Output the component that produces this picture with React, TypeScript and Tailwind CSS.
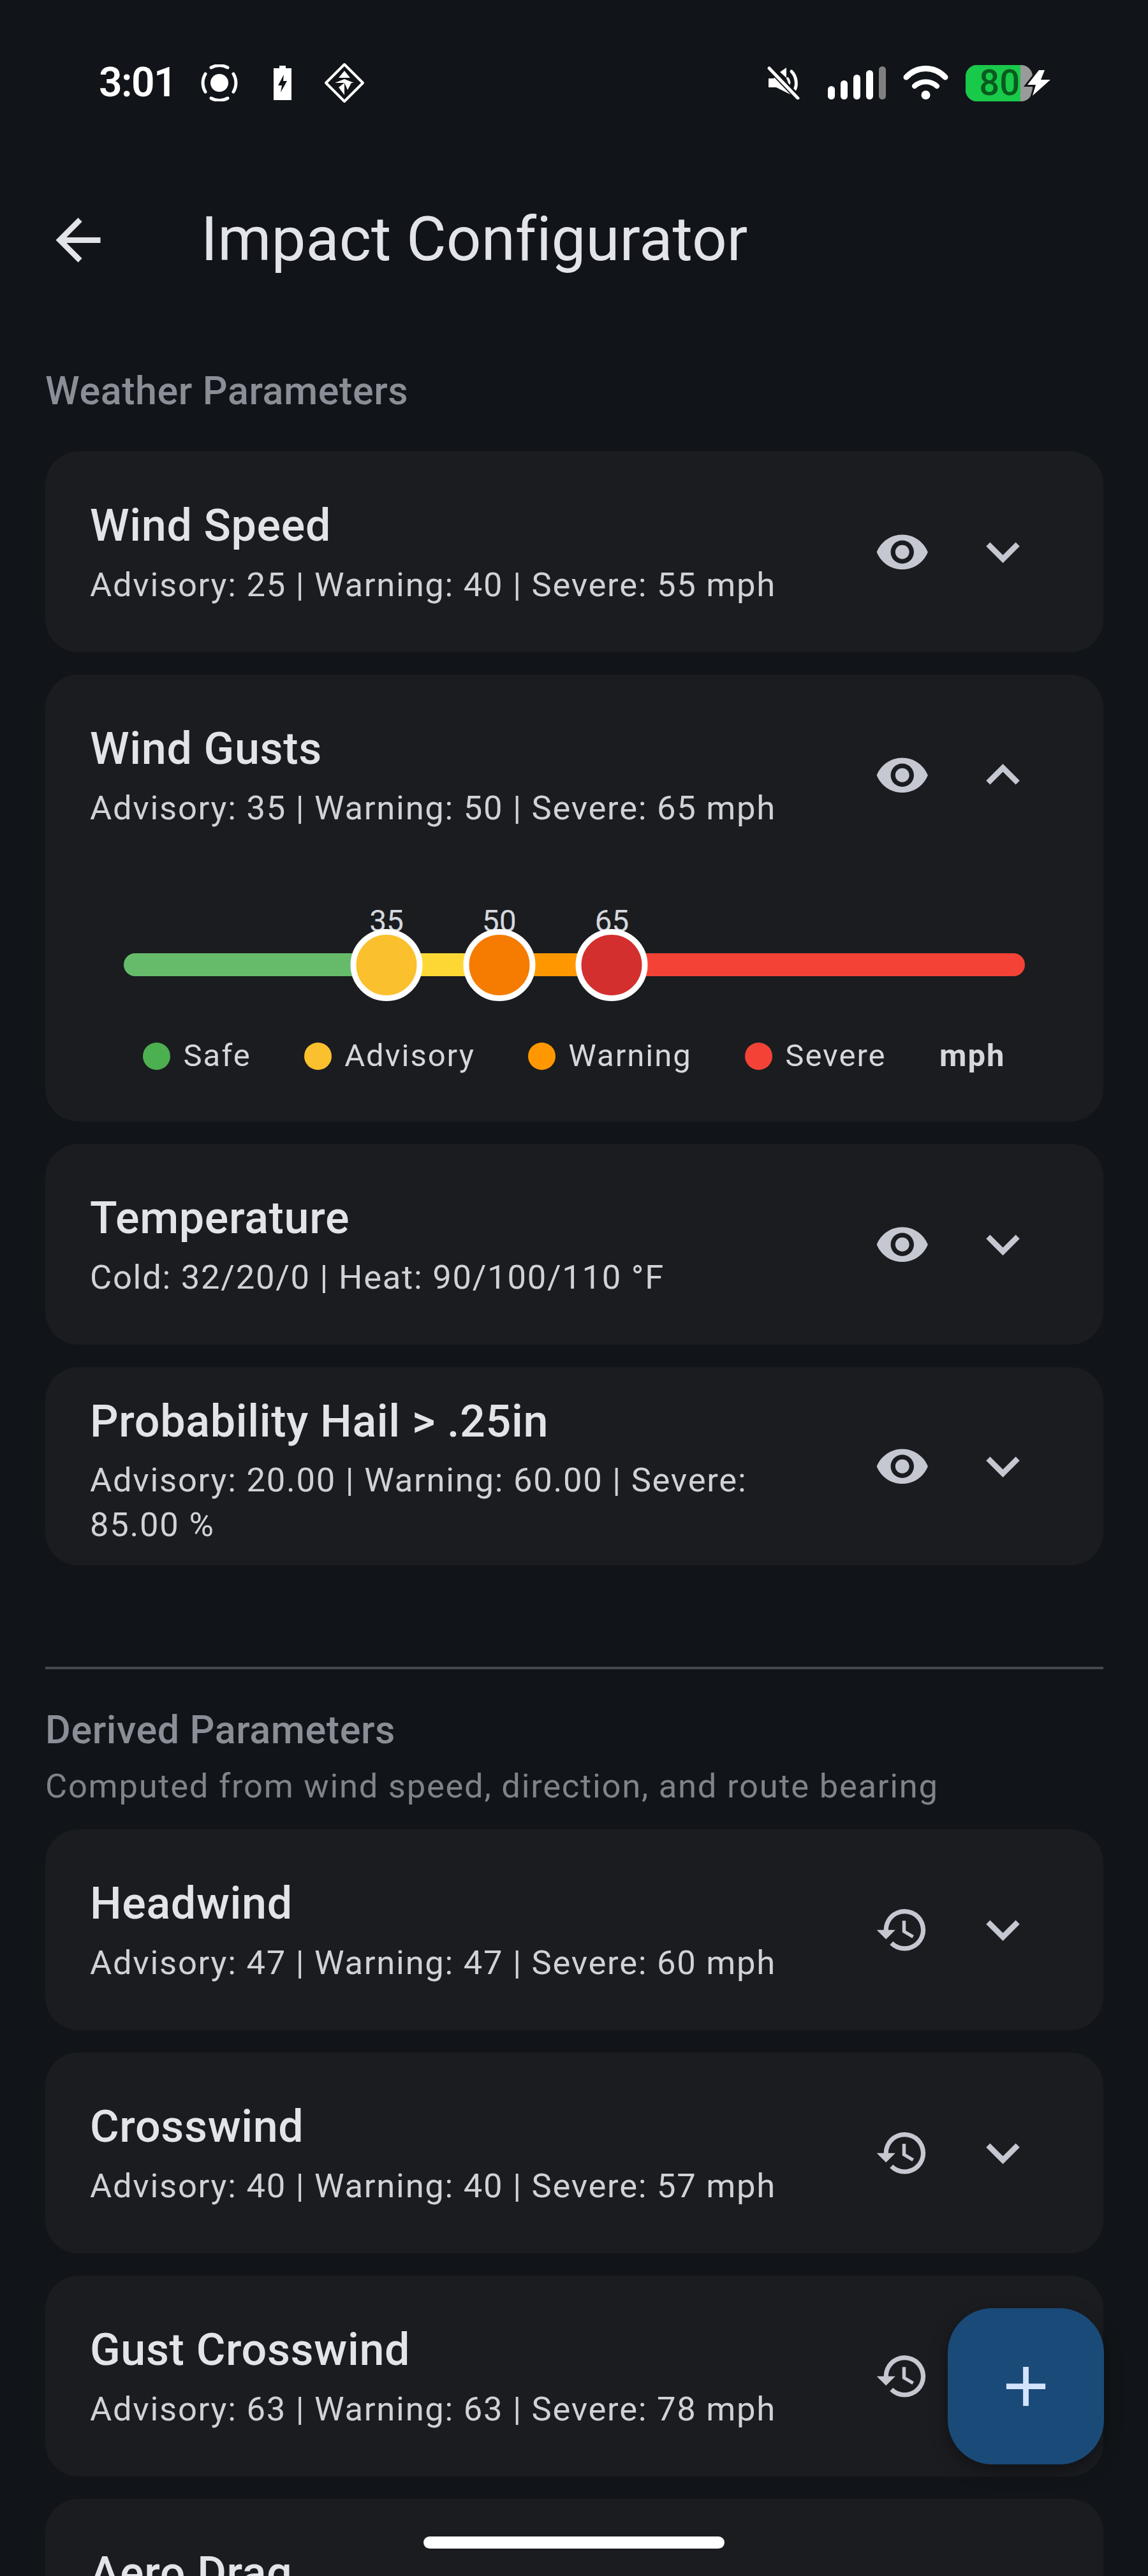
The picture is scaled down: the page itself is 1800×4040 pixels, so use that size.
import { MdAdd, MdArrowBack, MdExpandLess, MdExpandMore, MdHistory, MdVisibility } from "react-icons/md";

type Param = {
  name: string;
  summary: string;
  icon: "eye" | "history";
  expanded?: boolean;
  twoLine?: boolean;
};

const WEATHER: Param[] = [
  { name: "Wind Speed", summary: "Advisory: 25 | Warning: 40 | Severe: 55 mph", icon: "eye" },
  { name: "Wind Gusts", summary: "Advisory: 35 | Warning: 50 | Severe: 65 mph", icon: "eye", expanded: true },
  { name: "Temperature", summary: "Cold: 32/20/0 | Heat: 90/100/110 °F", icon: "eye" },
  { name: "Probability Hail > .25in", summary: "Advisory: 20.00 | Warning: 60.00 | Severe: 85.00 %", icon: "eye", twoLine: true },
];

const DERIVED: Param[] = [
  { name: "Headwind", summary: "Advisory: 47 | Warning: 47 | Severe: 60 mph", icon: "history" },
  { name: "Crosswind", summary: "Advisory: 40 | Warning: 40 | Severe: 57 mph", icon: "history" },
  { name: "Gust Crosswind", summary: "Advisory: 63 | Warning: 63 | Severe: 78 mph", icon: "history" },
  { name: "Aero Drag", summary: "\u00a0", icon: "history" },
];

const SCALE_MAX = 120;
const GUST_THUMBS = [
  { value: 35, className: "bg-[#fbc02d]" },
  { value: 50, className: "bg-[#f57c00]" },
  { value: 65, className: "bg-[#d32f2f]" },
];
const GUST_SEGMENTS = [
  { from: 0, to: 35, className: "bg-[#66bb6a] rounded-l-full" },
  { from: 35, to: 50, className: "bg-[#fdd835]" },
  { from: 50, to: 65, className: "bg-[#ff9800]" },
  { from: 65, to: 120, className: "bg-[#f44336] rounded-r-full" },
];
const LEGEND = [
  { label: "Safe", className: "bg-[#4caf50]" },
  { label: "Advisory", className: "bg-[#fbc02d]" },
  { label: "Warning", className: "bg-[#ff9800]" },
  { label: "Severe", className: "bg-[#f44336]" },
];

function StatusBar() {
  return (
    <div className="mt-[80px] flex h-[100px] items-center justify-between pl-[155px] pr-[153px]">
      <div className="flex items-center">
        <span className="w-[160px] text-[64px] font-semibold leading-none text-white tracking-[-1.500px]">3:01</span>
        <svg width="58" height="58" viewBox="0 0 58 58" fill="none" stroke="white" strokeWidth="5" strokeLinecap="round">
          <circle cx="29" cy="29" r="14" fill="white" stroke="none" />
          <path d="M16 5a27 27 0 0 1 26 0" />
          <path d="M16 53a27 27 0 0 0 26 0" />
          <path d="M7 15a27 27 0 0 0 0 28" />
          <path d="M51 15a27 27 0 0 1 0 28" />
        </svg>
        <svg className="ml-[56px]" width="28" height="54" viewBox="0 0 28 54">
          <path d="M9 0h10v4h9v50H0V4h9z" fill="white" />
          <path d="M16 14 7 31h6l-2 11 10-18h-6z" fill="#111418" />
        </svg>
        <svg className="ml-[51px]" width="64" height="64" viewBox="0 0 64 64" fill="none">
          <path d="M32 3 61 32 32 61 3 32z" stroke="white" strokeWidth="4" strokeLinejoin="round" />
          <path d="M32 13 23 24h9zM32 13l9 11h-9zM17 32l15-6v6zM47 32l-15-6v6zM32 32h11l-6 11zM32 32v19l-9-12z" fill="white" />
        </svg>
      </div>
      <div className="flex items-center">
        <svg width="52" height="52" viewBox="0 0 52 52" fill="none">
          <path d="M2 19h8l6-6 20 24v7L14 33H2z" fill="white" />
          <path d="M20 9l10-7v16z" fill="white" />
          <path d="M38 8c9 9 9 24 4 30" stroke="white" strokeWidth="5" strokeLinecap="round" />
          <path d="M32 19c2 3 3 6 2 9" stroke="white" strokeWidth="4" strokeLinecap="round" />
          <path d="M3 2l46 48" stroke="#111418" strokeWidth="10" />
          <path d="M3 3l45 47" stroke="white" strokeWidth="5" strokeLinecap="round" />
        </svg>
        <div className="ml-[43px] flex h-[52px] items-end gap-[9px]">
          <span className="h-[21px] w-[11px] rounded-full bg-white" />
          <span className="h-[30px] w-[11px] rounded-full bg-white" />
          <span className="h-[39px] w-[11px] rounded-full bg-white" />
          <span className="h-[46px] w-[11px] rounded-full bg-white" />
          <span className="h-[52px] w-[11px] rounded-full bg-[#808080]" />
        </div>
        <svg className="ml-[27px]" width="71" height="54" viewBox="0 0 71 54" fill="none" stroke="white" strokeLinecap="round">
          <path d="M5 18C22 0 49 0 66 18" strokeWidth="9" />
          <path d="M18 32c10-9 25-9 35 0" strokeWidth="8" />
          <circle cx="35.500" cy="46" r="7" fill="white" stroke="none" />
        </svg>
        <div className="ml-[27px] h-[57px] w-[105px] rounded-[18px] bg-[#9a9a9a]">
          <div className="flex h-full w-[86px] items-center justify-end rounded-l-[18px] bg-[#19c94a] pr-[1px]">
            <span className="text-[56px] font-medium leading-none text-[#0a5a1e]">80</span>
          </div>
        </div>
        <svg className="ml-[-8px] overflow-visible" width="36" height="40" viewBox="0 0 36 40">
          <path d="M18 0 0 23h13l-5 17 28-25H21l6-15z" fill="white" stroke="#111418" strokeWidth="6" paintOrder="stroke" />
        </svg>
      </div>
    </div>
  );
}

function GustSlider() {
  return (
    <div className="px-[70px] pb-[68px]">
      <div className="relative mx-[53px] h-[248px]">
        <div className="absolute left-0 right-0 top-[122px] flex h-[36px]">
          {GUST_SEGMENTS.map((s) => (
            <div
              key={s.from}
              className={`h-full ${s.className}`}
              style={{ width: `${((s.to - s.from) / SCALE_MAX) * 100}%` }}
            />
          ))}
        </div>
        {GUST_THUMBS.map((t) => (
          <div
            key={t.value}
            className="absolute top-[37px] flex -translate-x-1/2 flex-col items-center"
            style={{ left: `${(t.value / SCALE_MAX) * 100}%` }}
          >
            <span className="h-[47px] text-[48px] leading-[70px] text-[#d5d7dc]">{t.value}</span>
            <span className={`box-border h-[113px] w-[113px] rounded-full border-[9px] border-white ${t.className}`} />
          </div>
        ))}
      </div>
      <div className="flex h-[70px] items-center justify-evenly text-[49px] tracking-[2px] text-[#d5d7dc]">
        {LEGEND.map((l) => (
          <div key={l.label} className="flex items-center gap-[20px]">
            <span className={`h-[43px] w-[43px] rounded-full ${l.className}`} />
            <span>{l.label}</span>
          </div>
        ))}
        <span className="font-bold">mph</span>
      </div>
    </div>
  );
}

function ParamCard({ param }: { param: Param }) {
  const Chevron = param.expanded ? MdExpandLess : MdExpandMore;
  const LeadIcon = param.icon === "eye" ? MdVisibility : MdHistory;
  return (
    <div className="rounded-[52px] bg-[#1a1c20]">
      <div className={`flex items-center py-[28px] pl-[70px] pr-[88px] ${param.twoLine ? "min-h-[311px]" : "min-h-[315px]"}`}>
        <div className={`min-w-0 flex-1 pr-[70px] ${param.twoLine ? "pt-[4px]" : "pb-[8px]"}`}>
          <div className="text-[70px] font-medium leading-[105px] tracking-[0.66px] text-[#e2e4e9]">{param.name}</div>
          <div className={`text-[52.500px] leading-[70px] tracking-[1.75px] text-[#d0d2d8] ${param.twoLine ? "mt-[4px]" : "mt-[5px]"}`}>
            {param.summary}
          </div>
        </div>
        <div className="flex items-center text-[#c5c8d0]">
          <div className="flex w-[175px] justify-center">
            <LeadIcon size={87.5} />
          </div>
          <div className="flex w-[140px] justify-center">
            <Chevron size={105} />
          </div>
        </div>
      </div>
      {param.expanded && <GustSlider />}
    </div>
  );
}

export default function App() {
  return (
    <div className="relative h-[4040px] w-[1800px] overflow-hidden bg-[#111418] font-['Roboto',sans-serif]">
      <StatusBar />

      <div className="mt-[74px] flex h-[245px] items-center pl-[70px] text-[#e2e4e9]">
        <MdArrowBack size={105} />
        <h1 className="mb-[3px] ml-[140px] text-[96px] font-normal leading-none tracking-[0.06px]">Impact Configurator</h1>
      </div>

      <div className="pl-[71px] pr-[70px]">
        <div className="mb-[51px] mt-[70px] text-[61px] font-medium leading-[88px] tracking-[0.6px] text-[#8a8e96]">
          Weather Parameters
        </div>
        <div className="flex flex-col gap-[35px]">
          {WEATHER.map((p) => (
            <ParamCard key={p.name} param={p} />
          ))}
        </div>

        <div className="mt-[159px] h-[4px] bg-[#45484d]" />

        <div className="mt-[51px] text-[61px] font-medium leading-[88px] tracking-[0.6px] text-[#8a8e96]">
          Derived Parameters
        </div>
        <div className="mb-[33px] mt-[9px] text-[52.500px] leading-[70px] tracking-[1.75px] text-[#808389]">
          Computed from wind speed, direction, and route bearing
        </div>
        <div className="flex flex-col gap-[35px]">
          {DERIVED.map((p) => (
            <ParamCard key={p.name} param={p} />
          ))}
        </div>
      </div>

      <button className="absolute left-[1486px] top-[3620px] flex h-[245px] w-[245px] items-center justify-center rounded-[70px] bg-[#1a4a78] text-[#d3e4ff] shadow-[0_10px_28px_rgba(0,0,0,0.35)]">
        <MdAdd size={105} />
      </button>

      <div className="absolute bottom-[43px] left-[664px] h-[19px] w-[472px] rounded-full bg-white" />
    </div>
  );
}
